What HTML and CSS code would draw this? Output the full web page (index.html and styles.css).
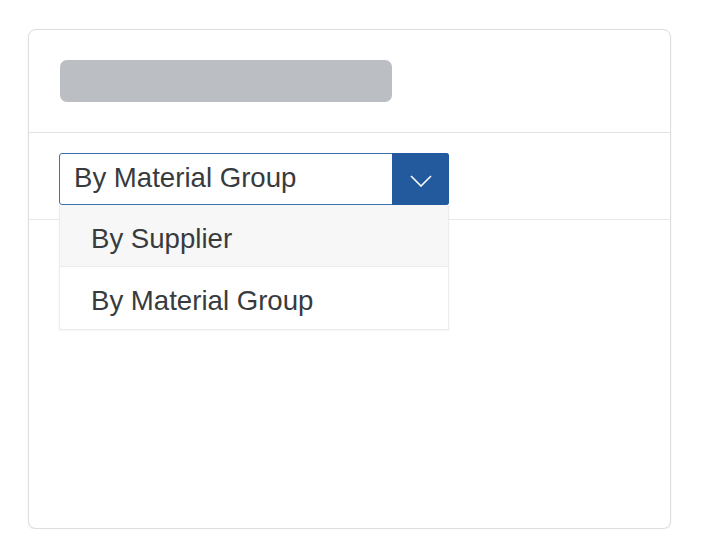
FILE: index.html
```html
<!DOCTYPE html>
<html>
<head>
<meta charset="utf-8">
<link rel="stylesheet" href="styles.css">
</head>
<body>
<div class="page">
  <div class="card">
    <div class="card-header">
      <div class="skeleton"></div>
    </div>
    <div class="card-toolbar">
      <div class="select-wrap">
        <div class="select">
          <span class="select-value">By Material Group</span>
          <span class="select-btn">
            <svg width="22" height="12" viewBox="0 0 22 12"><path d="M1 1 L11 11 L21 1" fill="none" stroke="#ffffff" stroke-width="1.6"/></svg>
          </span>
        </div>
        <ul class="dropdown">
          <li class="item hover">By Supplier</li>
          <li class="item">By Material Group</li>
        </ul>
      </div>
    </div>
    <div class="card-body"></div>
  </div>
</div>
</body>
</html>
```

FILE: styles.css
```css
html, body {
  margin: 0;
  padding: 0;
  background: #ffffff;
}
.page {
  padding: 29px 0 0 28px;
  font-family: "Liberation Sans", Arial, sans-serif;
  color: #32363a;
}
.card {
  width: 641px;
  height: 498px;
  border: 1px solid #dedede;
  border-radius: 8px;
  box-shadow: 0 1px 2px rgba(0,0,0,0.08);
  background: #fff;
  display: flex;
  flex-direction: column;
}
.card-header {
  padding: 30px 31px 30px 31px;
  border-bottom: 1px solid #e2e2e2;
}
.skeleton {
  width: 332px;
  height: 42px;
  border-radius: 7px;
  background: #bbbec2;
}
.card-toolbar {
  padding: 20px 31px 14px 30px;
  border-bottom: 1px solid #e8e8e8;
}
.select-wrap {
  position: relative;
  width: 390px;
}
.select {
  display: flex;
  height: 52px;
  box-sizing: border-box;
  border: 1px solid #3f70b0;
  border-radius: 3px;
  background: #fff;
}
.select-value {
  flex: 1;
  display: flex;
  align-items: center;
  padding-left: 14px;
  padding-bottom: 3px;
  font-size: 27.6px;
  color: #383b3e;
}
.select-btn {
  width: 57px;
  margin: -1px -1px -1px 0;
  background: #235a9e;
  border-radius: 0 3px 3px 0;
  display: flex;
  align-items: center;
  justify-content: center;
  padding-top: 3px;
  box-sizing: border-box;
}
.dropdown {
  position: absolute;
  top: 52px;
  left: 0;
  width: 390px;
  box-sizing: border-box;
  margin: 0;
  padding: 0;
  list-style: none;
  background: #fff;
  border: 1px solid #ececec;
  border-top: none;
  box-shadow: 0 1px 2px rgba(0,0,0,0.04);
}
.item {
  height: 62px;
  display: flex;
  align-items: center;
  padding-left: 31px;
  padding-top: 6px;
  font-size: 27.6px;
  color: #383b3e;
  box-sizing: border-box;
}
.item.hover {
  background: #f7f7f7;
  border-bottom: 1px solid #ececec;
}
.card-body {
  flex: 1;
}
```
